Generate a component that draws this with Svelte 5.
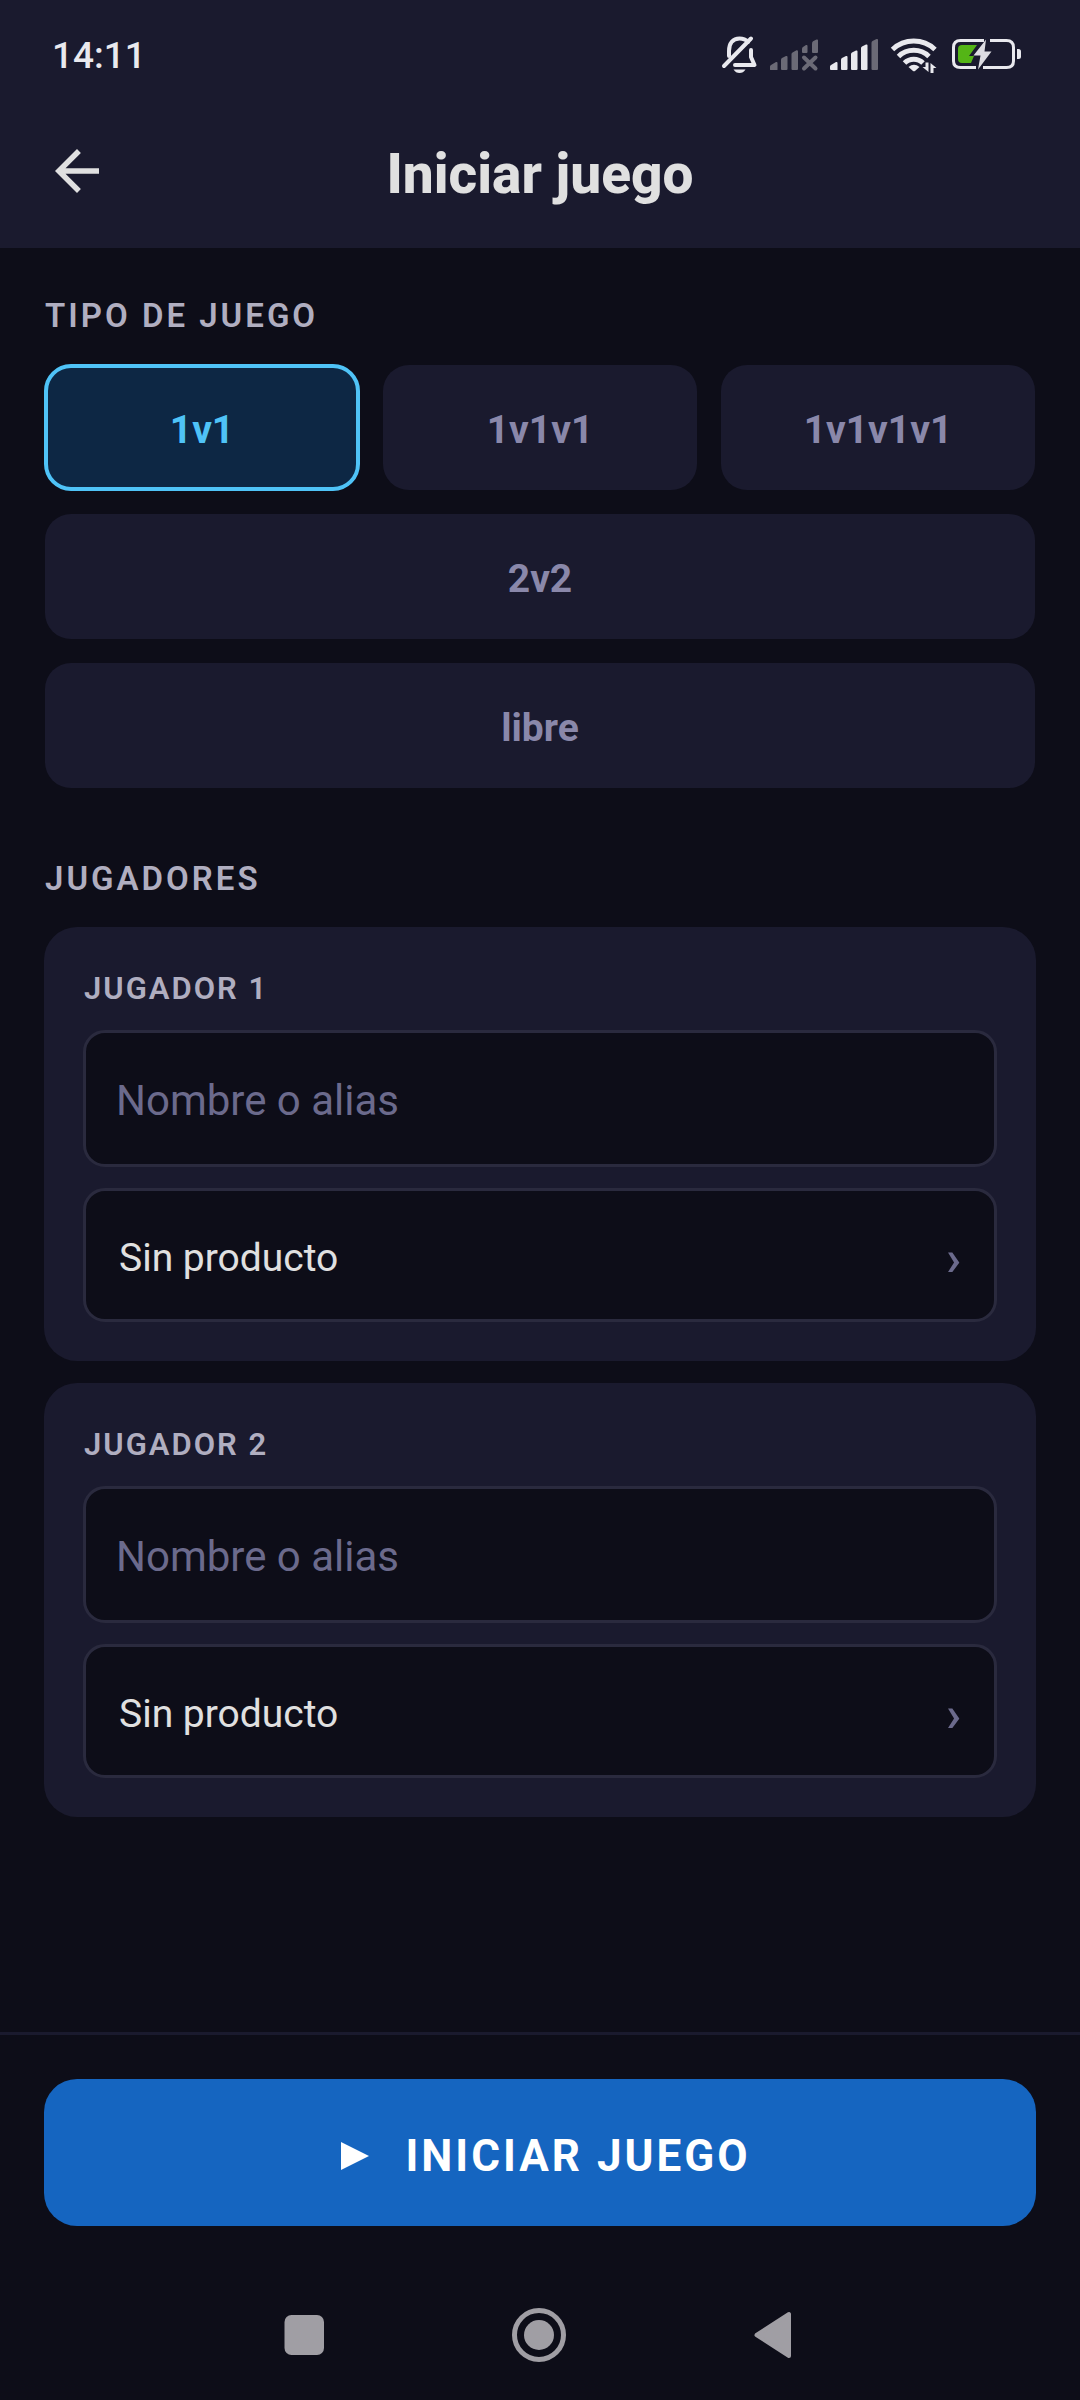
<script lang="ts">
  interface Player {
    id: number;
    alias: string;
    product: string;
  }

  const gameTypes = ['1v1', '1v1v1', '1v1v1v1', '2v2', 'libre'];
  const wideTypes = ['2v2', 'libre'];

  let selectedType = $state('1v1');
  let players = $state<Player[]>([
    { id: 1, alias: '', product: 'Sin producto' },
    { id: 2, alias: '', product: 'Sin producto' },
  ]);
</script>

<div class="screen">
  <header>
    <div class="status-bar">
      <span class="clock">14:11</span>
      <svg class="status-icons" viewBox="720 34 304 42" width="304" height="42" aria-hidden="true">
        <!-- muted bell -->
        <g fill="none" stroke="#e9e9ee" stroke-width="4" stroke-linecap="round" stroke-linejoin="round">
          <path d="M729 56V51C729 43 733 38.500 739.500 38.500C743 38.500 746 39.800 748 42" />
          <path d="M751 50V57L754.500 65H735" />
          <path d="M724 66L751 38.500" />
        </g>
        <path d="M733.500 69.500H745.500C744 72 742 73 739.500 73S735 72 733.500 69.500Z" fill="#e9e9ee" />
        <!-- first sim, no signal -->
        <g fill="#6b6a76">
          <path d="M770 69.500V66.500Q770 65.500 771 65L776 62Q777.500 61.500 777.500 63V69.500Q777.500 70 777 70H771Q770 70 770 69.500Z" />
          <path d="M781 69V60Q781 58.500 782 58L786 56Q787.500 55.500 787.500 57V69Q787.500 70 786.500 70H782Q781 70 781 69Z" />
          <path d="M791.500 69V54Q791.500 53 792.500 52.500L796.500 50.300Q798 50 798 51.500V69Q798 70 797 70H792.500Q791.500 70 791.500 69Z" />
          <path d="M802 52V49Q802 47.500 803 47L806 45Q807.500 44.500 807.500 46V52Q807.500 53 806.500 53H803Q802 53 802 52Z" />
          <path d="M812 52V43.500Q812 42 813 41.300L816.500 39.500Q818 39 818 40.500V52Q818 53 817 53H813Q812 53 812 52Z" />
          <path d="M804 57.500L815.500 68.500M815.500 57.500L804 68.500" stroke="#6b6a76" stroke-width="4" stroke-linecap="round" />
        </g>
        <!-- second sim -->
        <g fill="#e9e9ee">
          <path d="M830 69V66.500Q830 65.500 831 65L836 62Q837.500 61.500 837.500 63V69.500Q837.500 70 837 70H831Q830 70 830 69Z" />
          <path d="M841 69V60Q841 58.500 842 58L846 56Q847.500 55.500 847.500 57V69Q847.500 70 846.500 70H842Q841 70 841 69Z" />
          <path d="M851 69V54Q851 53 852 52.500L856 50.500Q857.500 50 857.500 51.500V69Q857.500 70 856.500 70H852Q851 70 851 69Z" />
          <path d="M861 69V48Q861 47 862 46.500L866 44.500Q867.500 44 867.500 45.500V69Q867.500 70 866.500 70H862Q861 70 861 69Z" />
          <path d="M871.500 69V43Q871.500 41.500 872.500 41L876.500 39Q878 38.500 878 40V69Q878 70 877 70H872.500Q871.500 70 871.500 69Z" fill="#6b6a76" />
        </g>
        <!-- wifi -->
        <g fill="none" stroke="#e9e9ee" stroke-width="5">
          <path d="M892.500 49.500A31 31 0 0 1 935 49.500" />
          <path d="M898.500 56.500A22 22 0 0 1 929 56.500" />
          <path d="M904.500 63A13 13 0 0 1 923 63" />
        </g>
        <path d="M908.500 67Q914 62.500 919.500 67L915 71Q914 71.500 913 71Z" fill="#e9e9ee" />
        <path d="M924 62H935V73H924Z" fill="#1a1a2e" />
        <path d="M925.500 62.500H928.500V72L922.500 67H925.500ZM930.500 73V63L936.500 68H933.500V73Z" fill="#e9e9ee" />
        <!-- battery -->
        <g fill="none" stroke="#e9e9ee" stroke-width="3">
          <path d="M984 40.500H960.500Q953.500 40.500 953.500 47.500V61Q953.500 67.500 960.500 67.500H976" />
          <path d="M990 40.500H1006.500Q1013.500 40.500 1013.500 47.500V61Q1013.500 67.500 1006.500 67.500H983" />
        </g>
        <path d="M1017 49H1018.500Q1021 49 1021 51.500V56.500Q1021 59 1018.500 59H1017Z" fill="#e9e9ee" />
        <path d="M962 45H977L969 56H974L971 63H962Q958 63 958 59V49Q958 45 962 45Z" fill="#54b516" />
        <path d="M986 39.500L973.500 55.500H980.500L978 69.500L991.500 51.500H984.500Z" fill="#dddce2" />
      </svg>
    </div>
    <div class="title-bar">
      <button class="back" type="button" aria-label="Volver">
        <svg viewBox="0 0 24 24" width="66" height="66" aria-hidden="true">
          <path d="M20 11H7.830l5.590-5.590L12 4l-8 8 8 8 1.410-1.410L7.830 13H20v-2z" fill="#e0e0e0" />
        </svg>
      </button>
      <h1>Iniciar juego</h1>
    </div>
  </header>

  <main>
    <section>
      <h2>TIPO DE JUEGO</h2>
      <div class="types">
        {#each gameTypes as type}
          <button
            class="type"
            class:wide={wideTypes.includes(type)}
            class:selected={type === selectedType}
            type="button"
            aria-pressed={type === selectedType}
            onclick={() => (selectedType = type)}
          >
            {type}
          </button>
        {/each}
      </div>
    </section>

    <section>
      <h2>JUGADORES</h2>
      <div class="players">
        {#each players as player (player.id)}
          <div class="player">
            <label for="alias-{player.id}">JUGADOR {player.id}</label>
            <input
              id="alias-{player.id}"
              type="text"
              placeholder="Nombre o alias"
              bind:value={player.alias}
            />
            <button class="product" type="button">
              <span>{player.product}</span>
              <span class="chevron">›</span>
            </button>
          </div>
        {/each}
      </div>
    </section>
  </main>

  <footer>
    <button class="start" type="button">
      <svg viewBox="0 0 48 28" width="48" height="28" aria-hidden="true">
        <path d="M12 0L40 14L12 28Z" fill="#fff" />
      </svg>
      <span>INICIAR JUEGO</span>
    </button>
  </footer>

  <nav>
    <button type="button" aria-label="Recientes">
      <svg viewBox="0 0 54 54" width="54" height="54" aria-hidden="true">
        <rect x="6.500" y="7" width="39.500" height="40" rx="7" fill="#a09ea4" />
      </svg>
    </button>
    <button type="button" aria-label="Inicio">
      <svg viewBox="0 0 56 56" width="56" height="56" aria-hidden="true">
        <circle cx="27" cy="28" r="24.500" fill="none" stroke="#a09ea4" stroke-width="5" />
        <circle cx="27" cy="28" r="15" fill="#a09ea4" />
      </svg>
    </button>
    <button type="button" aria-label="Atrás">
      <svg viewBox="0 0 54 54" width="54" height="54" aria-hidden="true">
        <path d="M8.500 27L41 6V48Z" fill="#a09ea4" stroke="#a09ea4" stroke-width="4" stroke-linejoin="round" />
      </svg>
    </button>
  </nav>
</div>

<style>
  :global(body) {
    background: #0d0d18;
  }

  .screen {
    min-height: 100vh;
    display: flex;
    flex-direction: column;
    background: #0d0d18;
    color: #e0e0e0;
    font-family: Roboto, sans-serif;
  }

  button,
  input {
    box-sizing: border-box;
    margin: 0;
    font-family: inherit;
  }

  button {
    padding: 0;
    border: none;
    background: none;
    color: inherit;
    cursor: pointer;
  }

  svg {
    display: block;
    flex-shrink: 0;
  }

  header {
    background: #1a1a2e;
  }

  .status-bar {
    display: flex;
    align-items: center;
    justify-content: space-between;
    height: 110px;
    padding: 0 56px 0 52px;
  }

  .clock {
    color: #e9e9ee;
    font-size: 37px;
    font-weight: 500;
  }

  .title-bar {
    box-sizing: border-box;
    display: grid;
    grid-template-columns: 66px 1fr 66px;
    align-items: center;
    height: 138px;
    padding: 0 44px 10px;
  }

  .back {
    align-self: start;
    margin-top: 28px;
  }

  h1 {
    margin: 0;
    text-align: center;
    font-size: 55px;
    font-weight: 800;
  }

  main {
    flex: 1;
    display: flex;
    flex-direction: column;
    gap: 66px;
    padding: 44px 44px 66px;
  }

  h2 {
    margin: 0 0 24px;
    padding-left: 1px;
    color: #b0aec0;
    font-size: 33px;
    font-weight: 600;
    line-height: 48px;
    letter-spacing: 3px;
  }

  .types {
    display: grid;
    grid-template-columns: repeat(3, 1fr);
    gap: 22px;
  }

  .type {
    height: 127px;
    padding-top: 4px;
    border: 1px solid transparent;
    border-radius: 27px;
    background: #1a1a2e padding-box;
    color: #8a88aa;
    font-size: 39px;
    font-weight: 700;
  }

  .wide {
    grid-column: 1 / -1;
  }

  .selected {
    border: 4px solid #4fc3f7;
    background: #0d2744;
    color: #4fc3f7;
  }

  .players {
    display: flex;
    flex-direction: column;
    gap: 22px;
  }

  .player {
    display: flex;
    flex-direction: column;
    padding: 39px;
    border-radius: 33px;
    background: #1a1a2e;
  }

  label {
    margin-bottom: 18px;
    padding-left: 1px;
    color: #b0aec0;
    font-size: 31px;
    font-weight: 600;
    line-height: 46px;
    letter-spacing: 2px;
  }

  input,
  .product {
    width: 100%;
    border: 3px solid #2a2a3e;
    border-radius: 22px;
    background: #0d0d18;
    color: #e0e0e0;
  }

  input {
    height: 137px;
    margin-bottom: 21px;
    padding: 4px 30px 0;
    font-size: 42px;
  }

  input::placeholder {
    color: #6b6a8c;
    opacity: 1;
  }

  .product {
    display: flex;
    align-items: center;
    justify-content: space-between;
    height: 134px;
    padding: 6px 33px 0;
    font-size: 39px;
  }

  .chevron {
    color: #6b6a8c;
    font-size: 50px;
    font-weight: 600;
  }

  footer {
    padding: 44px;
    border-top: 3px solid #1a1a2e;
  }

  .start {
    display: flex;
    align-items: center;
    justify-content: center;
    gap: 28px;
    width: 100%;
    height: 147px;
    padding-top: 6px;
    border-radius: 33px;
    background: #1565c0;
    color: #fff;
    font-size: 44px;
    font-weight: 700;
    letter-spacing: 3px;
  }

  nav {
    display: flex;
    justify-content: center;
    height: 130px;
  }

  nav button {
    display: flex;
    align-items: center;
    justify-content: center;
    width: 235px;
  }
</style>
